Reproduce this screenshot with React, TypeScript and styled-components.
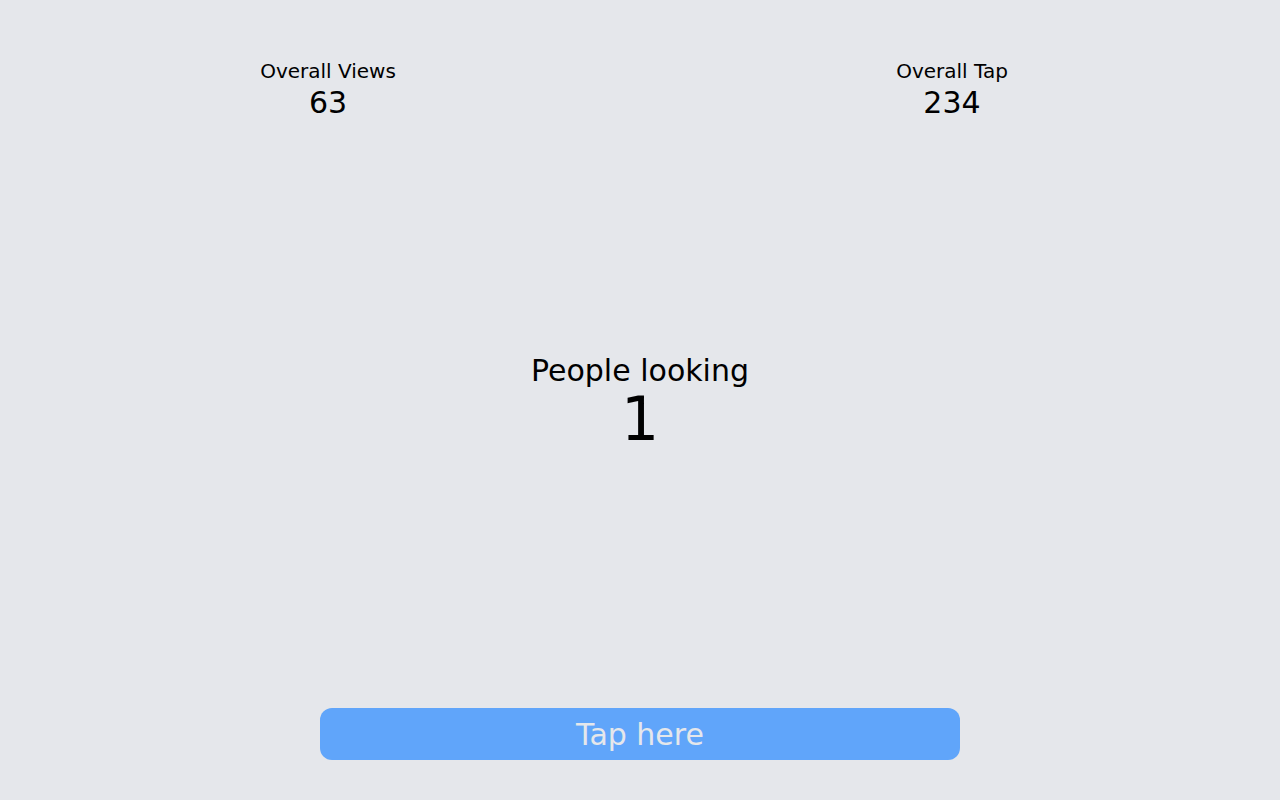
import React from "react";
import styled, { createGlobalStyle } from "styled-components";

const Global = createGlobalStyle`
  html, body { margin: 0; padding: 0; background: #e5e7eb; }
  body { font-family: "DejaVu Sans", sans-serif; color: #000; }
`;

const Page = styled.div`
  height: 100vh;
  display: grid;
  grid-template-rows: 1fr auto 1fr;
  box-sizing: border-box;
`;

const Header = styled.div`
  align-self: start;
  display: grid;
  grid-template-columns: 1fr 1fr;
  padding: 57px 16px 0;
`;

const Stat = styled.div`
  display: flex;
  flex-direction: column;
  align-items: center;
`;

const StatLabel = styled.div`
  font-size: 20px;
  line-height: 28px;
`;

const StatValue = styled.div`
  font-size: 30px;
  line-height: 36px;
`;

const Center = styled.div`
  display: flex;
  flex-direction: column;
  align-items: center;
  padding-top: 1px;
`;

const CenterLabel = styled.div`
  font-size: 30px;
  line-height: 36px;
`;

const CenterValue = styled.div`
  font-size: 60px;
  line-height: 60px;
`;

const Footer = styled.div`
  align-self: end;
  display: flex;
  justify-content: center;
  padding-bottom: 40px;
`;

const TapButton = styled.button`
  width: 640px;
  height: 52px;
  border: none;
  border-radius: 12px;
  background: #60a5fa;
  color: #e5e7eb;
  font-family: "DejaVu Sans", sans-serif;
  font-size: 30px;
  line-height: 36px;
  cursor: pointer;
  padding: 2px 0 0;
`;

export default function App() {
  return (
    <>
      <Global />
      <Page>
        <Header>
          <Stat>
            <StatLabel>Overall Views</StatLabel>
            <StatValue>63</StatValue>
          </Stat>
          <Stat>
            <StatLabel>Overall Tap</StatLabel>
            <StatValue>234</StatValue>
          </Stat>
        </Header>
        <Center>
          <CenterLabel>People looking</CenterLabel>
          <CenterValue>1</CenterValue>
        </Center>
        <Footer>
          <TapButton>Tap here</TapButton>
        </Footer>
      </Page>
    </>
  );
}
